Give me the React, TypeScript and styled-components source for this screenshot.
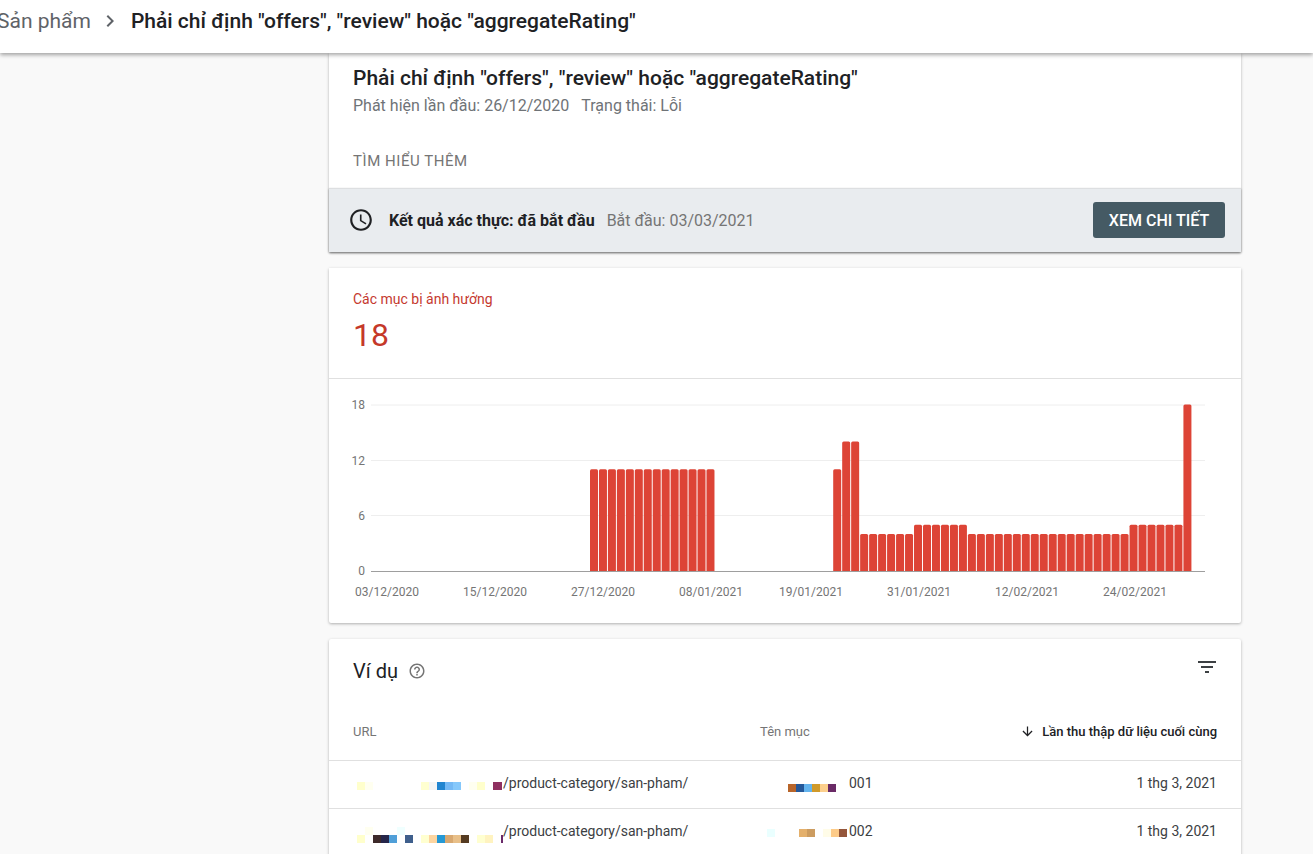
import styled, { createGlobalStyle } from 'styled-components';

const GlobalStyle = createGlobalStyle`
  * {
    box-sizing: border-box;
  }
  html, body {
    margin: 0;
    height: 100%;
    overflow: hidden;
    background: #f9f9f9;
    font-family: Roboto, "Noto Sans", sans-serif;
    color: #202124;
  }
`;

const Page = styled.div`
  height: 854px;
  overflow: hidden;
`;

const TopBar = styled.header`
  position: relative;
  z-index: 2;
  height: 53px;
  background: #fff;
  box-shadow: 0 2px 4px rgba(0, 0, 0, 0.35);
  display: flex;
  align-items: center;
  font-size: 21px;
  padding-bottom: 11px;
`;

const Crumb = styled.span`
  margin-left: -3px;
  color: #5f6368;
`;

const CrumbArrow = styled.svg`
  width: 24px;
  height: 24px;
  margin: 0 9px 0 7px;
  fill: #5f6368;
`;

const CrumbTitle = styled.span`
  font-weight: 500;
  color: #202124;
`;

const Main = styled.main`
  width: 912px;
  margin-left: 329px;
  display: flex;
  flex-direction: column;
  gap: 16px;
`;

const Card = styled.section`
  background: #fff;
  border-radius: 0 0 2px 2px;
  box-shadow: 0 1px 3px rgba(0, 0, 0, 0.3);
`;

const IssueHead = styled.div`
  padding: 13px 24px 0;
  height: 135px;
`;

const IssueTitle = styled.h1`
  margin: 0;
  font-size: 21px;
  line-height: 24px;
  font-weight: 500;
`;

const IssueMeta = styled.div`
  margin-top: 5px;
  display: flex;
  gap: 12px;
  font-size: 16px;
  line-height: 22px;
  color: #6f7377;
`;

const LearnMore = styled.div`
  margin-top: 34px;
  font-size: 15px;
  line-height: 20px;
  letter-spacing: 0.55px;
  color: #757575;
`;

const StatusBand = styled.div`
  height: 64px;
  display: flex;
  align-items: center;
  padding: 0 16px 1px 19px;
  background: #e9ecef;
  border-top: 1px solid #dddfe1;
  box-shadow: 0 1px 2px rgba(0, 0, 0, 0.4);
`;

const ClockIcon = styled.svg`
  width: 26px;
  height: 26px;
  fill: #202124;
  flex: none;
`;

const StatusText = styled.strong`
  margin-left: 15px;
  font-size: 16px;
  font-weight: 700;
`;

const StatusDate = styled.span`
  margin-left: 12px;
  font-size: 16px;
  color: #757575;
`;

const DetailButton = styled.button`
  margin-left: auto;
  width: 132px;
  height: 36px;
  border: 0;
  border-radius: 3px;
  background: #455a64;
  color: #fff;
  font-family: inherit;
  font-size: 16px;
  font-weight: 500;
`;

const Summary = styled.div`
  height: 111px;
  padding: 22px 24px 0;
  border-bottom: 1px solid #e0e0e0;
`;

const SummaryLabel = styled.div`
  font-size: 14px;
  line-height: 18px;
  color: #c5392f;
`;

const SummaryValue = styled.div`
  margin-top: 7px;
  font-size: 32px;
  line-height: 40px;
  color: #c53929;
`;

const ChartWrap = styled.div`
  height: 244px;
`;

const ChartSvg = styled.svg`
  display: block;
  width: 912px;
  height: 244px;
  font-family: Roboto, sans-serif;
  font-size: 12px;

  text {
    fill: #757575;
  }
`;

const ExamplesCard = styled(Card)`
  border-radius: 2px 2px 0 0;
`;

const ExamplesHead = styled.div`
  height: 64px;
  display: flex;
  align-items: flex-start;
  padding: 16px 22px 0 24px;
`;

const ExamplesTitle = styled.h2`
  margin: 0;
  font-size: 20px;
  line-height: 32px;
  font-weight: 400;
`;

const HelpIcon = styled.svg`
  width: 18px;
  height: 18px;
  margin: 7px 0 0 10px;
  fill: #757575;
`;

const FilterIcon = styled.svg`
  width: 24px;
  height: 24px;
  margin-left: auto;
  fill: #3c4043;
`;

const Row = styled.div`
  display: grid;
  grid-template-columns: 407px 1fr auto;
  padding: 0 24px;
  align-items: center;
  border-bottom: 1px solid #e0e0e0;
  height: 48px;
  font-size: 14px;
  color: #3c4043;
`;

const HeadRow = styled(Row)`
  height: 58px;
  font-size: 13px;
  color: #757575;
`;

const SortHead = styled.span`
  display: flex;
  align-items: center;
  gap: 7px;
  font-weight: 500;
  color: #202124;
`;

const SortIcon = styled.svg`
  width: 15px;
  height: 15px;
  fill: #202124;
`;

const Cell = styled.div`
  display: flex;
  align-items: flex-start;
  height: 47px;
  line-height: 45px;
`;

const Mosaic = styled.svg<{ $w: number }>`
  display: block;
  width: ${(p) => p.$w}px;
  height: 47px;
  flex: none;
`;

const Bars = [
  ...Array.from({ length: 14 }, (_, i) => ({ x: 590 + i * 8.96, v: 11 })),
  ...[
    11, 14, 14, 4, 4, 4, 4, 4, 4, 5, 5, 5, 5, 5, 5, 4, 4, 4, 4, 4, 4, 4, 4, 4, 4, 4, 4, 4, 4, 4, 4, 4, 4, 5, 5, 5, 5, 5,
    5, 18,
  ].map((v, i) => ({ x: 833.2 + i * 8.98, v })),
];

const yTicks = [
  { label: '18', y: 405 },
  { label: '12', y: 460.5 },
  { label: '6', y: 515.5 },
];

const xTicks = [
  { label: '03/12/2020', x: 387 },
  { label: '15/12/2020', x: 495 },
  { label: '27/12/2020', x: 603 },
  { label: '08/01/2021', x: 711 },
  { label: '19/01/2021', x: 811 },
  { label: '31/01/2021', x: 919 },
  { label: '12/02/2021', x: 1027 },
  { label: '24/02/2021', x: 1135 },
];

// chart is drawn in page coordinates, shifted by the card offset
const Chart = () => (
  <ChartSvg viewBox="329 379 912 244">
    {yTicks.map((t) => (
      <g key={t.label}>
        <line x1="371" x2="1205" y1={t.y} y2={t.y} stroke="#eeeeee" />
        <text x="365" y={t.y + 4} textAnchor="end">
          {t.label}
        </text>
      </g>
    ))}
    <text x="365" y="575" textAnchor="end">
      0
    </text>
    {Bars.map((b) => {
      const h = b.v * 9.25;
      return <rect key={b.x} x={b.x} y={571 - h} width="8" height={h + 2} rx="1.5" fill="#dd4436" />;
    })}
    <rect x="560" y="571" width="680" height="3" fill="#fff" />
    <line x1="371" x2="1205" y1="571.5" y2="571.5" stroke="#9e9e9e" />
    {xTicks.map((t) => (
      <text key={t.label} x={t.x} y="596" textAnchor="middle">
        {t.label}
      </text>
    ))}
  </ChartSvg>
);

type Pixel = [number, number, string, number?];

const url1: Pixel[] = [
  [357, 782, '#ffffcc'],
  [365, 782, '#fffff0'],
  [421, 782, '#ffffd0'],
  [429, 782, '#f5f5f5'],
  [437, 782, '#2185d0'],
  [445, 782, '#74b9f5'],
  [453, 782, '#85c8fb'],
  [469, 782, '#fffff0'],
  [477, 782, '#ffffcc'],
  [493, 782, '#8f3060', 9],
];

const url2: Pixel[] = [
  [365, 827, '#fffff0'],
  [397, 827, '#f0ffff'],
  [357, 835, '#ffffcc'],
  [373, 835, '#3e2a2a'],
  [381, 835, '#26264a'],
  [389, 835, '#4f9fd8'],
  [405, 835, '#3f5f8c'],
  [421, 835, '#ffffd0'],
  [429, 835, '#fdd5a0'],
  [437, 835, '#2598d4'],
  [445, 835, '#d8a870'],
  [453, 835, '#e8bf88'],
  [461, 835, '#553b22'],
  [477, 835, '#ffffd0'],
  [485, 835, '#fff3c0'],
  [501, 835, '#6a2a6a', 2],
];

const name1: Pixel[] = [
  [788, 784, '#b8652a'],
  [796, 784, '#24589a'],
  [804, 784, '#64b4ee'],
  [812, 784, '#d09a2a'],
  [820, 784, '#fccf8c'],
  [828, 784, '#6a2a66'],
];

const name2: Pixel[] = [
  [767, 829, '#eaffff'],
  [799, 829, '#e4b06c'],
  [807, 829, '#cc9c60'],
  [823, 829, '#fffce8'],
  [831, 829, '#fdcb88'],
  [839, 829, '#94553a'],
];

// blurred-out part of a url: pixels are given in page coordinates
const Blur = ({ pixels, left, top, width }: { pixels: Pixel[]; left: number; top: number; width: number }) => (
  <Mosaic $w={width} viewBox={`${left} ${top} ${width} 47`}>
    {pixels.map(([x, y, c, w]) => (
      <rect key={`${x}-${y}`} x={x} y={y} width={w ?? 8} height="8" fill={c} />
    ))}
  </Mosaic>
);

const rows = [
  { url: url1, name: name1, top: 761, id: '001', urlW: 150, nameW: 89 },
  { url: url2, name: name2, top: 809, id: '002', urlW: 150, nameW: 89 },
];

export default function App() {
  return (
    <Page>
      <GlobalStyle />
      <TopBar>
        <Crumb>Sản phẩm</Crumb>
        <CrumbArrow viewBox="0 0 24 24">
          <path d="M10 6L8.59 7.41 13.17 12l-4.58 4.59L10 18l6-6z" />
        </CrumbArrow>
        <CrumbTitle>Phải chỉ định "offers", "review" hoặc "aggregateRating"</CrumbTitle>
      </TopBar>

      <Main>
        <Card>
          <IssueHead>
            <IssueTitle>Phải chỉ định "offers", "review" hoặc "aggregateRating"</IssueTitle>
            <IssueMeta>
              <span>Phát hiện lần đầu: 26/12/2020</span>
              <span>Trạng thái: Lỗi</span>
            </IssueMeta>
            <LearnMore>TÌM HIỂU THÊM</LearnMore>
          </IssueHead>
          <StatusBand>
            <ClockIcon viewBox="0 0 24 24">
              <path d="M11.99 2C6.47 2 2 6.48 2 12s4.47 10 9.99 10C17.52 22 22 17.52 22 12S17.52 2 11.99 2zM12 20c-4.42 0-8-3.58-8-8s3.58-8 8-8 8 3.58 8 8-3.58 8-8 8zm.5-13H11v6l5.25 3.15.75-1.23-4.5-2.67z" />
            </ClockIcon>
            <StatusText>Kết quả xác thực: đã bắt đầu</StatusText>
            <StatusDate>Bắt đầu: 03/03/2021</StatusDate>
            <DetailButton>XEM CHI TIẾT</DetailButton>
          </StatusBand>
        </Card>

        <Card>
          <Summary>
            <SummaryLabel>Các mục bị ảnh hưởng</SummaryLabel>
            <SummaryValue>18</SummaryValue>
          </Summary>
          <ChartWrap>
            <Chart />
          </ChartWrap>
        </Card>

        <ExamplesCard>
          <ExamplesHead>
            <ExamplesTitle>Ví dụ</ExamplesTitle>
            <HelpIcon viewBox="0 0 24 24">
              <path d="M11 18h2v-2h-2v2zm1-16C6.48 2 2 6.48 2 12s4.48 10 10 10 10-4.48 10-10S17.52 2 12 2zm0 18c-4.41 0-8-3.59-8-8s3.59-8 8-8 8 3.59 8 8-3.59 8-8 8zm0-14c-2.21 0-4 1.79-4 4h2c0-1.1.9-2 2-2s2 .9 2 2c0 2-3 1.75-3 5h2c0-2.25 3-2.5 3-5 0-2.21-1.79-4-4-4z" />
            </HelpIcon>
            <FilterIcon viewBox="0 0 24 24">
              <path d="M10 18h4v-2h-4v2zM3 6v2h18V6H3zm3 7h12v-2H6v2z" />
            </FilterIcon>
          </ExamplesHead>
          <HeadRow>
            <span>URL</span>
            <span>Tên mục</span>
            <SortHead>
              <SortIcon viewBox="0 0 24 24">
                <path d="M20 12l-1.41-1.41L13 16.17V4h-2v12.17l-5.58-5.59L4 12l8 8 8-8z" />
              </SortIcon>
              Lần thu thập dữ liệu cuối cùng
            </SortHead>
          </HeadRow>
          {rows.map((r) => (
            <Row key={r.id}>
              <Cell>
                <Blur pixels={r.url} left={353} top={r.top} width={r.urlW} />
                /product-category/san-pham/
              </Cell>
              <Cell>
                <Blur pixels={r.name} left={760} top={r.top} width={r.nameW} />
                {r.id}
              </Cell>
              <Cell>1 thg 3, 2021</Cell>
            </Row>
          ))}
        </ExamplesCard>
      </Main>
    </Page>
  );
}
